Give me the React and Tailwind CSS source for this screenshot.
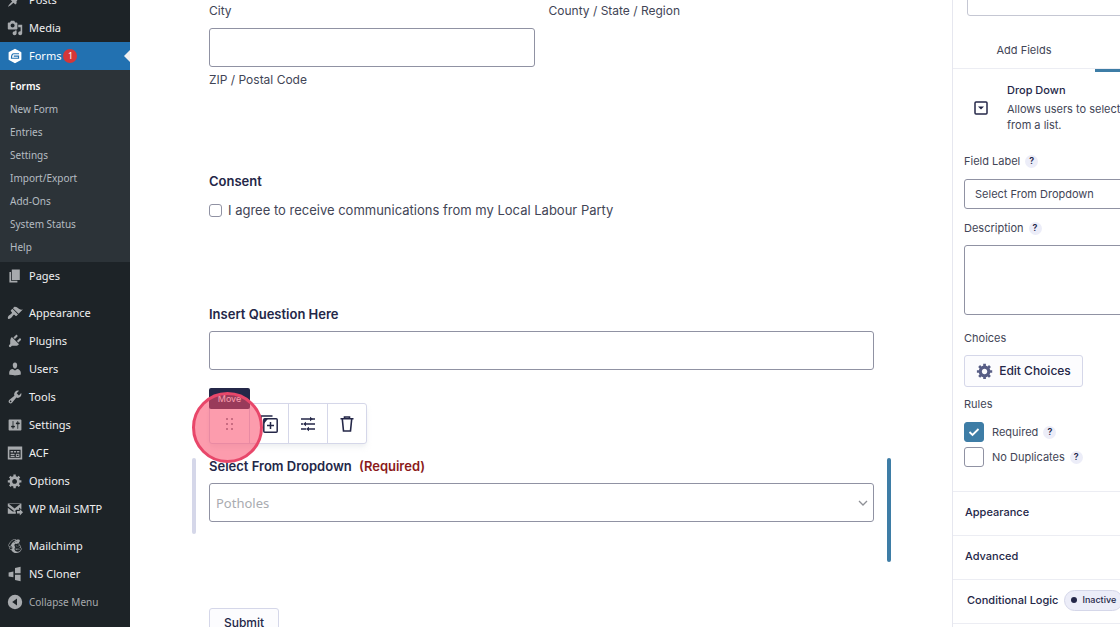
import React, { useState } from 'react';
import { FaMailchimp } from 'react-icons/fa';

const ICONS = {
  post: 'M10.44 3.02l1.82-1.82 6.36 6.35-1.83 1.82c-1.05-.68-2.48-.57-3.41.36l-.75.75c-.92.93-1.04 2.35-.35 3.41l-1.83 1.82-2.41-2.41-2.8 2.79c-.42.42-3.38 2.71-3.8 2.29s1.86-3.39 2.28-3.81l2.79-2.79L4.1 9.36l1.83-1.82c1.05.69 2.48.57 3.4-.36l.75-.75c.93-.92 1.05-2.35.36-3.41z',
  media: 'M13 11V4c0-.55-.45-1-1-1h-1.67L9 1H5L3.67 3H2c-.55 0-1 .45-1 1v7c0 .55.45 1 1 1h10c.55 0 1-.45 1-1zM7 4.5c1.38 0 2.5 1.12 2.5 2.5S8.38 9.5 7 9.5 4.5 8.38 4.5 7 5.62 4.5 7 4.5zM14 6h5v10.5c0 1.38-1.12 2.5-2.5 2.5S14 17.88 14 16.5s1.12-2.5 2.5-2.5c.17 0 .34.02.5.05V9h-3V6zm-4 8.05V13h2v3.5c0 1.38-1.12 2.5-2.5 2.5S7 17.88 7 16.5 8.12 14 9.5 14c.17 0 .34.02.5.05z',
  page: 'M6 15V2h10v13H6zm-1 1h8v2H3V5h2v11z',
  appearance: 'M14.48 11.06L7.41 3.99l1.5-1.5c.5-.56 2.3-.47 3.51.32 1.21.8 1.43 1.28 2.91 2.1 1.18.64 2.45 1.26 4.45.85zm-.71.71L6.7 4.7 4.93 6.47c-.39.39-.39 1.02 0 1.41l1.06 1.06c.39.39.39 1.03 0 1.42-.6.6-1.43 1.11-2.21 1.69-.35.26-.7.53-1.01.84C1.43 14.23.4 16.08 1.4 17.07c.99 1 2.84-.03 4.18-1.36.31-.31.58-.66.85-1.02.57-.78 1.08-1.61 1.69-2.21.39-.39 1.02-.39 1.41 0l1.06 1.06c.39.39 1.02.39 1.41 0z',
  plugins: 'M13.11 4.36L9.87 7.6 8 5.73l3.24-3.24c.35-.34 1.05-.2 1.56.32.52.51.66 1.21.31 1.55zm-8 1.77l.91-1.12 9.01 9.01-1.19.84c-.71.71-2.63 1.16-3.82 1.16H6.14L4.9 17.26c-.59.59-1.54.59-2.12 0-.59-.58-.59-1.53 0-2.12l1.24-1.24v-3.88c0-1.13.4-3.19 1.09-3.89zm7.26 3.97l3.24-3.24c.34-.35 1.04-.21 1.55.31.52.51.66 1.21.31 1.55l-3.24 3.25z',
  users: 'M10 9.25c-2.27 0-2.73-3.44-2.73-3.44C7 4.02 7.82 2 9.97 2c2.16 0 2.98 2.02 2.71 3.81 0 0-.41 3.44-2.68 3.44zm0 2.57L12.72 10c2.39 0 4.52 2.33 4.52 4.53v2.49s-3.65 1.13-7.24 1.13c-3.65 0-7.24-1.13-7.24-1.13v-2.49c0-2.25 1.94-4.48 4.47-4.48z',
  tools: 'M16.68 9.77c-1.34 1.34-3.3 1.67-4.95.99l-5.41 6.52c-.99.99-2.59.99-3.58 0s-.99-2.59 0-3.57l6.52-5.42c-.68-1.65-.35-3.61.99-4.95 1.28-1.28 3.12-1.62 4.72-1.06l-2.89 2.89 2.82 2.82 2.86-2.87c.53 1.58.18 3.39-1.08 4.65zM3.81 16.21c.4.39 1.04.39 1.43 0 .4-.4.4-1.04 0-1.43-.39-.4-1.03-.4-1.43 0-.39.39-.39 1.03 0 1.43z',
  settings: 'M18 16V4c0-.55-.45-1-1-1H3c-.55 0-1 .45-1 1v12c0 .55.45 1 1 1h14c.55 0 1-.45 1-1zM8 11h1c.55 0 1 .45 1 1s-.45 1-1 1H8v1.5c0 .28-.22.5-.5.5s-.5-.22-.5-.5V13H6c-.55 0-1-.45-1-1s.45-1 1-1h1V5.500c0-.28.22-.5.5-.5s.5.22.5.5V11zm5-2h-1c-.55 0-1-.45-1-1s.45-1 1-1h1V5.500c0-.28.22-.5.5-.5s.5.22.5.5V7h1c.55 0 1 .45 1 1s-.45 1-1 1h-1v5.500c0 .28-.22.5-.5.5s-.5-.22-.5-.5V9z',
  acf: 'M1 2h18v16H1zM3 6v10h14V6zM4.500 7.500h3v2h-3zM8.500 7.500h3v2h-3zM12.500 7.500h3v2h-3zM4.500 11h5v1.500h-5zM4.500 13.500h5V15h-5zM11 11h4.500v4H11zM12.200 12.200v1.600h2.100v-1.600z',
  gear: 'M18 12h-2.18c-.17.7-.44 1.35-.81 1.93l1.54 1.54-2.1 2.1-1.54-1.54c-.58.36-1.23.63-1.91.79V19H8v-2.18c-.68-.16-1.33-.43-1.91-.79l-1.54 1.54-2.12-2.12 1.54-1.54c-.36-.58-.63-1.23-.79-1.91H1V9.03h2.17c.16-.7.44-1.35.8-1.94L2.43 5.55l2.1-2.1 1.54 1.54c.58-.37 1.24-.64 1.93-.81V2h3v2.18c.68.16 1.33.43 1.91.79l1.54-1.54 2.12 2.12-1.54 1.54c.36.59.64 1.24.8 1.94H18V12zm-8.5 1.5c1.66 0 3-1.34 3-3s-1.34-3-3-3-3 1.34-3 3 1.34 3 3 3z',
  mail: 'M1 3h17v7.500l-3-2.500v3h-3.500L9.500 13 1 6.500zM2.500 3.800L9.500 9.500l7-5.700zM1 8.500l6 4.500h4v3H1zM12.500 12.500h3.500v-2.500l4 4-4 4v-2.500h-3.500z',
  cloner: 'M2 8l6-1.200v7.400L2 13zM10 2.500L17 1v8h-7zM10 11h7v8l-7-1.500z',
  collapse: 'M10 1a9 9 0 1 0 0 18 9 9 0 0 0 0-18zM12.500 5.500v9L6.500 10z',
};

function Icon({ name, className }) {
  return (
    <svg viewBox="0 0 20 20" fill="currentColor" fillRule="evenodd" className={className} aria-hidden="true">
      <path d={ICONS[name]} />
    </svg>
  );
}

const MENU = [
  [
    { label: 'Pages', icon: 'page' },
  ],
  [
    { label: 'Appearance', icon: 'appearance' },
    { label: 'Plugins', icon: 'plugins' },
    { label: 'Users', icon: 'users' },
    { label: 'Tools', icon: 'tools' },
    { label: 'Settings', icon: 'settings' },
    { label: 'ACF', icon: 'acf' },
    { label: 'Options', icon: 'gear' },
    { label: 'WP Mail SMTP', icon: 'mail' },
  ],
  [
    { label: 'Mailchimp', icon: 'mailchimp' },
    { label: 'NS Cloner', icon: 'cloner' },
  ],
];

const FORMS_SUBMENU = ['Forms', 'New Form', 'Entries', 'Settings', 'Import/Export', 'Add-Ons', 'System Status', 'Help'];

function MenuItem({ label, icon }) {
  return (
    <a href="#" className="flex h-7 items-center gap-1.5 pl-[7px] text-[#f0f0f1]">
      {icon === 'mailchimp'
        ? <FaMailchimp className="size-4 shrink-0 text-[#a7aaad]" />
        : <Icon name={icon} className="size-4 shrink-0 text-[#a7aaad]" />}
      <span>{label}</span>
    </a>
  );
}

function Sidebar() {
  return (
    <nav className="-mt-[14px] w-[130px] shrink-0 bg-[#1d2327] font-['Noto_Sans',sans-serif] text-[11px] whitespace-nowrap">
      <MenuItem label="Posts" icon="post" />
      <MenuItem label="Media" icon="media" />
      <a href="#" className="relative flex h-7 items-center gap-1.5 bg-[#2271b1] pl-[7px] text-white">
        <svg viewBox="0 0 20 20" className="size-4 shrink-0" aria-hidden="true">
          <path d="M10 2l7 4v8l-7 4-7-4V6z" fill="#fff" stroke="#fff" strokeWidth="2" strokeLinejoin="round" />
          <path d="M15 7.200H8.500C6.300 7.200 5.600 9.500 5.600 12.800h8.800v-2.600H8.500" fill="none" stroke="#2271b1" strokeWidth="1.500" />
        </svg>
        <span>Forms</span>
        <span className="-ml-1 flex size-[14px] items-center justify-center rounded-full bg-[#d63638] text-[9px]">1</span>
        <span className="absolute top-2 right-0 border-y-6 border-r-6 border-transparent border-r-[#f0f0f1]" />
      </a>
      <ul className="bg-[#2c3338] pt-[5px] pb-[3px] text-[10px]">
        {FORMS_SUBMENU.map((item, i) => (
          <li key={item}>
            <a
              href="#"
              className={`flex h-[23px] items-center pl-[10px] ${i === 0 ? 'font-semibold text-white' : 'text-[#b5bcc2]'}`}
            >
              {item}
            </a>
          </li>
        ))}
      </ul>
      {MENU.map((group, i) => (
        <div key={i} className="mb-[9px]">
          {group.map(item => <MenuItem key={item.label} {...item} />)}
        </div>
      ))}
      <button type="button" className="-mt-[9px] flex h-7 items-center gap-1.5 pl-[7px] text-[10px] text-[#a7aaad]">
        <Icon name="collapse" className="size-4 shrink-0" />
        <span>Collapse Menu</span>
      </button>
    </nav>
  );
}

function FieldToolbar() {
  const cell = 'flex items-center justify-center border-[#d5d7e9]';
  return (
    <div className="relative ml-[17px] flex h-[41px] w-[158px] rounded-[3px] border border-[#d5d7e9] bg-white text-[#242748] shadow-md shadow-gray-200/60">
      <button type="button" aria-label="Move" className={`${cell} w-10 border-r`}>
        <svg viewBox="0 0 10 14" className="h-[14px] w-[10px]" fill="#6b7080">
          <circle cx="2" cy="2" r="1" /><circle cx="7" cy="2" r="1" />
          <circle cx="2" cy="7" r="1" /><circle cx="7" cy="7" r="1" />
          <circle cx="2" cy="12" r="1" /><circle cx="7" cy="12" r="1" />
        </svg>
      </button>
      <button type="button" aria-label="Duplicate" className={`${cell} w-[39px] border-r`}>
        <svg viewBox="0 0 18 18" className="size-[18px]" fill="none" stroke="currentColor" strokeWidth="1.500">
          <path d="M1 14V1h11.500" />
          <path d="M3.800 9V3.800H8z" fill="currentColor" stroke="none" />
          <rect x="3.800" y="3.800" width="13.400" height="13.400" rx="1" />
          <path d="M10.500 7v7M7 10.500h7" />
        </svg>
      </button>
      <button type="button" aria-label="Settings" className={`${cell} w-[39px] border-r`}>
        <svg viewBox="0 0 16 16" className="size-4" fill="none" stroke="currentColor" strokeWidth="1.500">
          <path d="M1 3h9M12 3h3M1 8h2M6 8h9M1 13h5M9 13h6" />
          <path d="M10 .8v4.400L13 3zM6 5.800v4.400L3 8zM9 10.800v4.400L6 13z" fill="currentColor" stroke="none" />
        </svg>
      </button>
      <button type="button" aria-label="Delete" className={`${cell} flex-1`}>
        <svg viewBox="0 0 16 16" className="size-4" fill="none" stroke="currentColor" strokeWidth="1.600">
          <path d="M1.500 2.800h13M5.500 2.500V1h5v1.500M3.300 3l1.200 12h7l1.200-12" />
        </svg>
      </button>
      <span className="absolute -top-4 -left-px flex h-[21px] w-[41px] items-center justify-center rounded-xs bg-[#242748] text-[9px] text-white">
        Move
      </span>
      <span className="absolute -top-3 -left-[18px] size-[71px] rounded-full border-[3px] border-[#e8476a] bg-[#fa4b69]/55" />
    </div>
  );
}

function FormCanvas() {
  const [agreed, setAgreed] = useState(false);
  const input = 'block h-[39px] w-full rounded-[3px] border border-[#9092a3] bg-white px-1.5';
  return (
    <main className="min-w-0 flex-1 pr-[61px] pl-[62px] text-[13px] leading-4 text-[#424556]">
      <div className="px-[17px] pt-[3px]">
        <div className="grid grid-cols-2 gap-x-[14px] text-xs leading-4">
          <span>City</span>
          <span>County / State / Region</span>
          <div className="mt-[9px]">
            <input id="zip" className={input} />
            <label htmlFor="zip" className="mt-[5px] block">ZIP / Postal Code</label>
          </div>
        </div>

        <fieldset className="mt-[85px]">
          <legend className="font-semibold text-[#242748]">Consent</legend>
          <label className="mt-[13px] flex items-center gap-1.5">
            <input
              type="checkbox"
              checked={agreed}
              onChange={e => setAgreed(e.target.checked)}
              className="size-[13px] appearance-none rounded-[3px] border border-[#9092a3] checked:bg-[#3e7da6]"
            />
            I agree to receive communications from my Local Labour Party
          </label>
        </fieldset>

        <label htmlFor="question" className="mt-[88px] block font-semibold text-[#242748]">Insert Question Here</label>
        <input id="question" className={`${input} mt-[9px]`} />
      </div>

      <div className="mt-[33px]">
        <FieldToolbar />
        <div className="mt-[14px] flex items-start">
          <div className="h-[76px] w-1 rounded-xs bg-[#d5d7e9]" />
          <div className="mx-[13px] flex-1">
            <label htmlFor="dropdown" className="block font-semibold text-[#242748]">
              Select From Dropdown <span className="ml-1 text-[#8b1a1a]">(Required)</span>
            </label>
            <div className="relative mt-[9px]">
              <select id="dropdown" className={`${input} appearance-none font-['Noto_Sans',sans-serif] text-[#a9abb0]`}>
                <option>Potholes</option>
              </select>
              <svg viewBox="0 0 10 6" className="pointer-events-none absolute top-[17px] right-1.5 h-1.5 w-[10px]" fill="none" stroke="#8e9096" strokeWidth="1.300">
                <path d="M1 1l4 4 4-4" />
              </svg>
            </div>
          </div>
          <div className="h-[104px] w-1 rounded-xs bg-[#3e7da6]" />
        </div>
      </div>

      <button type="button" className="mt-[46px] ml-[17px] h-[30px] w-[70px] rounded-[3px] border border-[#d5d7e9] bg-[#fcfcfe] text-xs font-medium text-[#242748]">
        Submit
      </button>
    </main>
  );
}

function Help() {
  return (
    <button type="button" className="flex size-[13px] items-center justify-center rounded-full bg-[#ecedf8] text-[9px] font-semibold text-[#242748]">
      ?
    </button>
  );
}

function Rule({ label, defaultChecked }) {
  return (
    <div className="flex items-center gap-[5px]">
      <label className="relative flex items-center gap-2">
        <input
          type="checkbox"
          defaultChecked={defaultChecked}
          className="peer size-5 appearance-none rounded-[3px] border border-[#9092a3] bg-white checked:border-[#3e7da6] checked:bg-[#3e7da6]"
        />
        <svg viewBox="0 0 20 20" className="absolute left-0 hidden size-5 peer-checked:block" fill="none" stroke="#fff" strokeWidth="1.800">
          <path d="M5.500 10l3 3L14.500 7" />
        </svg>
        {label}
      </label>
      <Help />
    </div>
  );
}

function SettingsPanel() {
  const section = 'flex h-11 w-full items-center border-t border-[#ecedf3] pb-[3px]';
  return (
    <aside className="w-[168px] shrink-0 overflow-hidden border-l border-[#e6e7ef] text-[11px] leading-4 text-[#424556]">
      {/* the panel is wider than its slot and runs off the window edge */}
      <div className="w-[285px]">
        <input aria-label="Search" className="-mt-4 ml-[14px] block h-8 w-[257px] rounded-[3px] border border-[#c5c7d3]" />
        <div className="flex h-[53px] border-b border-[#ecedf3]">
          <button type="button" className="h-full w-[142px] pt-[15px]">Add Fields</button>
          <button type="button" aria-label="Field Settings" className="-mb-1 flex-1 border-b-3 border-[#3e7da6]" />
        </div>

        <div className="flex items-center gap-[19px] pt-[13px] pl-[21px]">
          <svg viewBox="0 0 14 14" className="size-[14px] shrink-0" fill="none" stroke="#242748" strokeWidth="1.500">
            <rect x="1" y="1" width="12" height="12" rx="1" />
            <path d="M4 5.500h6L7 8.500z" fill="#242748" stroke="none" />
          </svg>
          <div>
            <h2 className="mb-[3px] font-medium text-[#242748]">Drop Down</h2>
            <p className="w-[120px]">Allows users to select from a list.</p>
          </div>
        </div>

        <div className="pl-[11px]">
          <div className="mt-5 flex items-center gap-[5px]">
            <label htmlFor="field-label">Field Label</label>
            <Help />
          </div>
          <input id="field-label" defaultValue="Select From Dropdown" className="mt-[10px] block h-[30px] w-[260px] rounded-[3px] border border-[#9092a3] px-[10px]" />
          <div className="mt-[11px] flex items-center gap-[5px]">
            <label htmlFor="description">Description</label>
            <Help />
          </div>
          <textarea id="description" className="mt-[9px] block h-[70px] w-[260px] resize-none rounded-[3px] border border-[#9092a3]" />
          <h3 className="mt-[15px]">Choices</h3>
          <button type="button" className="mt-[9px] flex h-8 w-[119px] items-center justify-center gap-[5px] rounded-[3px] border border-[#d5d7e9] bg-[#fcfcfe] text-xs font-medium text-[#242748]">
            <Icon name="gear" className="size-[18px] text-[#585e86]" />
            Edit Choices
          </button>
          <h3 className="mt-[9px]">Rules</h3>
          <div className="mt-[10px] flex flex-col gap-[5px]">
            <Rule label="Required" defaultChecked />
            <Rule label="No Duplicates" />
          </div>
        </div>

        <div className="mt-6 border-b border-[#ecedf3] font-medium text-[#242748]">
          <button type="button" className={`${section} pl-3`}>Appearance</button>
          <button type="button" className={`${section} pl-3`}>Advanced</button>
          <button type="button" className={`${section} gap-1.5 pl-[14px]`}>
            Conditional Logic
            <span className="flex h-[21px] items-center gap-[5px] rounded-full border border-[#d5d7e9] bg-[#ecedf8] px-1.5 text-[9px]">
              <span className="size-1.5 rounded-full bg-[#242748]" />
              Inactive
            </span>
          </button>
        </div>
      </div>
    </aside>
  );
}

export default function App() {
  return (
    <div className="flex h-screen overflow-hidden bg-white font-['Inter',sans-serif]">
      <Sidebar />
      <FormCanvas />
      <SettingsPanel />
    </div>
  );
}
